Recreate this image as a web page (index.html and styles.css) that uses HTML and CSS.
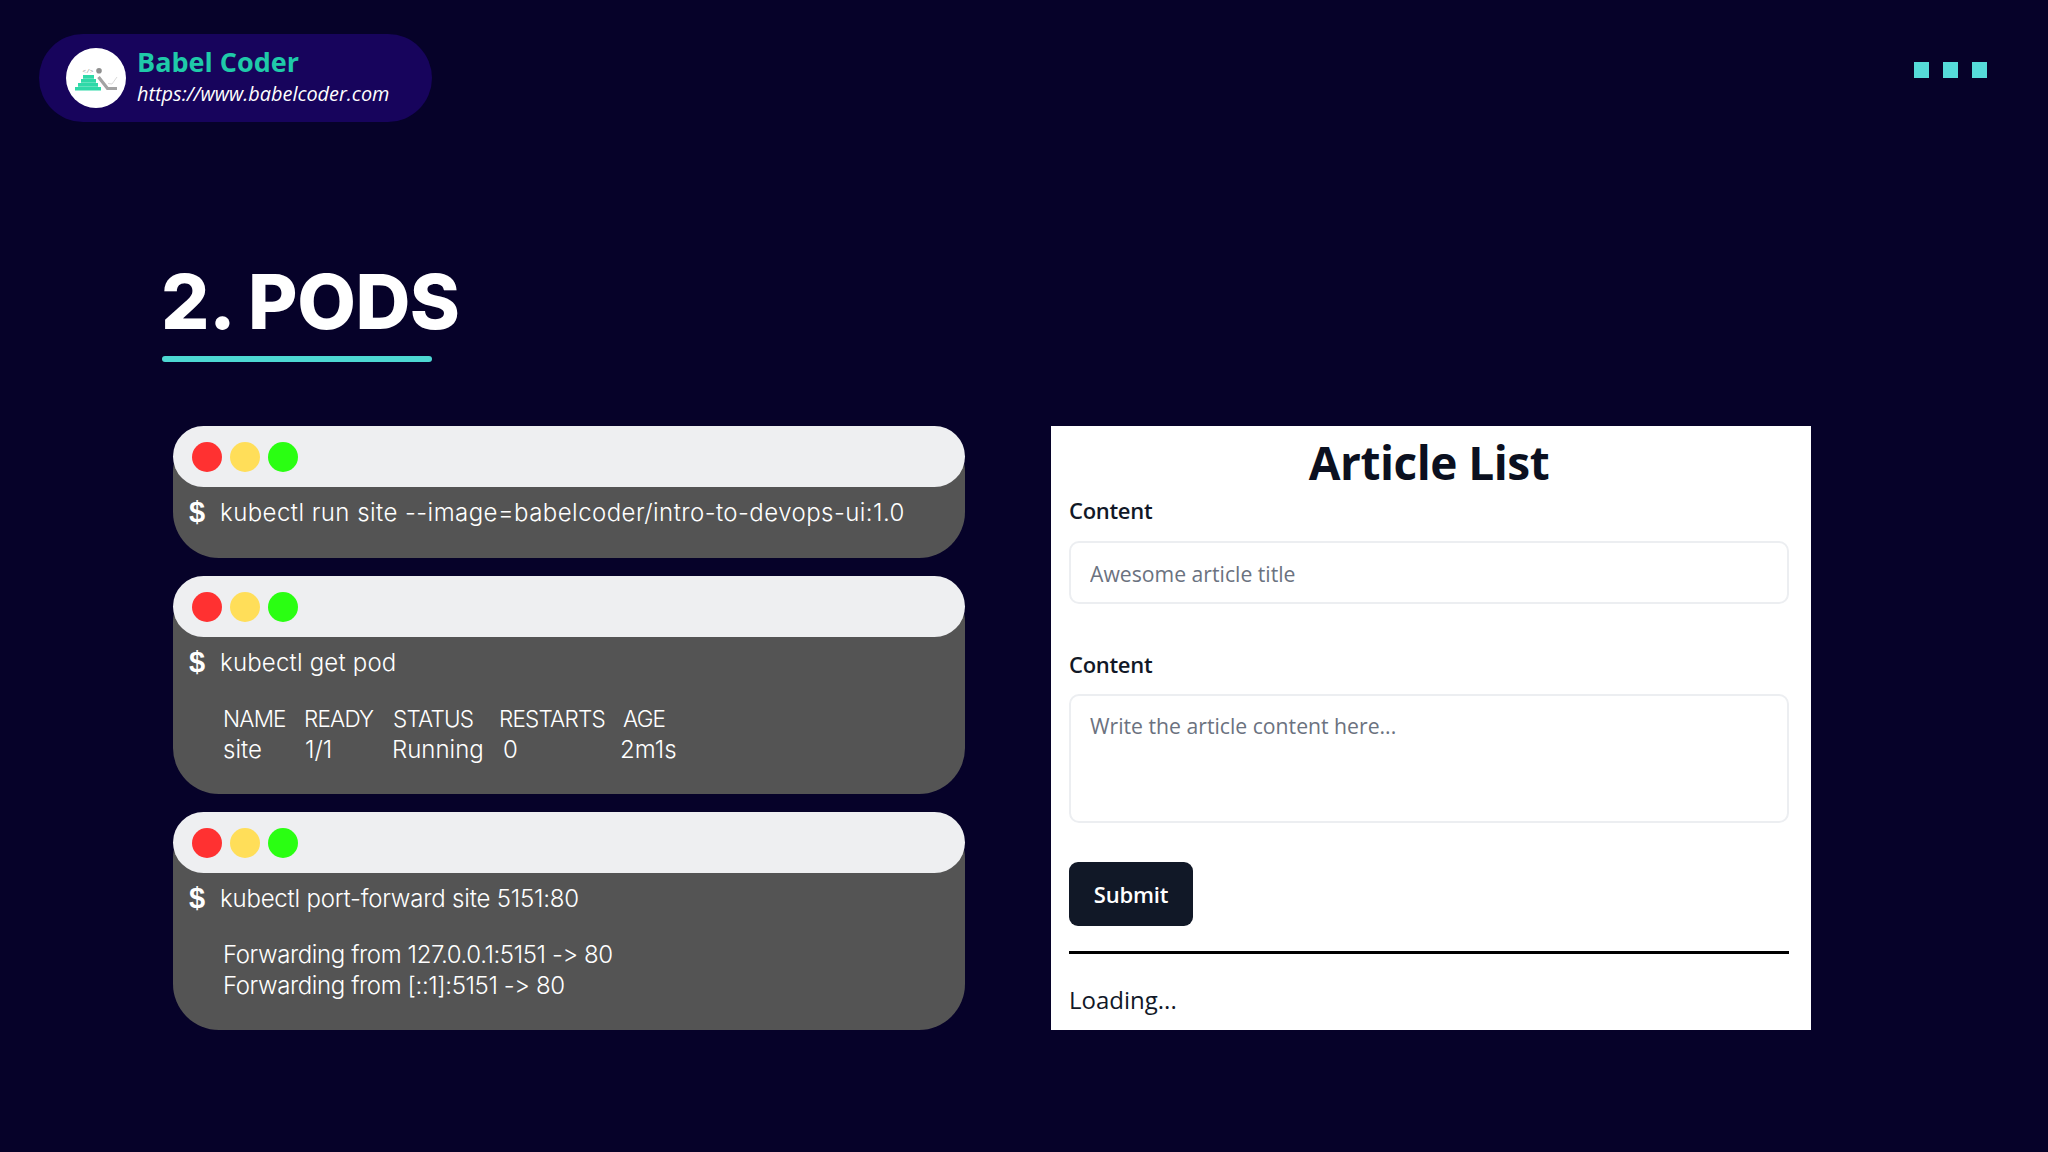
FILE: index.html
```html
<!DOCTYPE html>
<html lang="en">
<head>
<meta charset="utf-8">
<title>2. Pods</title>
<link rel="stylesheet" href="styles.css">
</head>
<body>
<div class="page">
  <header class="topbar">
    <div class="brand">
      <svg class="logo" viewBox="0 0 60 60" aria-hidden="true">
        <circle cx="30" cy="30" r="30" fill="#fff"/>
        <path d="M17 27h11v3.800H17zM15 31h15v3.800H15zM12 35h20v3.800H12zM9 39h26v3.500H9z" fill="#2fd9a8"/>
        <text x="22" y="25" class="logo-code">&lt;/&gt;</text>
        <circle cx="33" cy="22.700" r="2.800" fill="#8f8f8f"/>
        <path d="M32.500 29 41.500 40.500H51" fill="none" stroke="#a3a3a3" stroke-width="3.200"/>
        <path d="M42 35.500 46 36 51 29" fill="none" stroke="#cfcfcf" stroke-width=".8"/>
      </svg>
      <div class="brand-text">
        <div class="brand-name">Babel Coder</div>
        <div class="brand-url">https://www.babelcoder.com</div>
      </div>
    </div>
    <div class="squares"><i></i><i></i><i></i></div>
  </header>

  <section class="heading">
    <h1>2. PODS</h1>
    <div class="rule"></div>
  </section>

  <main class="content">
    <div class="terminals">
      <article class="term term-short">
        <div class="term-bar"><i class="dot red"></i><i class="dot yellow"></i><i class="dot green"></i></div>
        <div class="cmd"><b>$</b><span class="wide">kubectl run site --image=babelcoder/intro-to-devops-ui:1.0</span></div>
      </article>

      <article class="term term-tall">
        <div class="term-bar"><i class="dot red"></i><i class="dot yellow"></i><i class="dot green"></i></div>
        <div class="cmd"><b>$</b><span class="slight">kubectl get pod</span></div>
        <div class="output">
          <div class="row row-head"><span>NAME</span><span>READY</span><span>STATUS</span><span>RESTARTS</span><span>AGE</span></div>
          <div class="row row-data"><span>site</span><span>1/1</span><span>Running</span><span>0</span><span>2m1s</span></div>
        </div>
      </article>

      <article class="term term-tall">
        <div class="term-bar"><i class="dot red"></i><i class="dot yellow"></i><i class="dot green"></i></div>
        <div class="cmd"><b>$</b><span class="narrow">kubectl port-forward site 5151:80</span></div>
        <div class="output">
          <div class="line">Forwarding from 127.0.0.1:5151 -&gt; 80</div>
          <div class="line">Forwarding from [::1]:5151 -&gt; 80</div>
        </div>
      </article>
    </div>

    <div class="card">
      <h2>Article List</h2>
      <form class="form">
        <label class="label">Content</label>
        <input class="field field-input" placeholder="Awesome article title">
        <label class="label label-second">Content</label>
        <textarea class="field field-area" placeholder="Write the article content here..."></textarea>
        <button class="submit" type="button">Submit</button>
      </form>
      <hr class="divider">
      <p class="loading">Loading...</p>
    </div>
  </main>
</div>
</body>
</html>
```
FILE: styles.css
```css
* { box-sizing: border-box; }
html, body { margin: 0; padding: 0; }
body { background: #060229; }

.page {
  width: 2048px;
  height: 1152px;
  padding: 34px 61px 0 39px;
  overflow: hidden;
  background: #060229;
}

.topbar { display: flex; justify-content: space-between; align-items: flex-start; }

.brand {
  width: 393px;
  height: 88px;
  padding-left: 27px;
  display: flex;
  align-items: center;
  gap: 11px;
  border-radius: 44px;
  background: #17045c;
}
.logo { width: 60px; height: 60px; flex: none; }
.logo-code { font: 6px "Liberation Mono", monospace; fill: #8f8f8f; text-anchor: middle; }
.brand-text { display: flex; flex-direction: column; margin-top: -2px; }
.brand-name {
  font: 700 27px/32px "Open Sans", sans-serif;
  color: #1fcaa9;
}
.brand-url {
  font: italic 400 19.900px/28px "Open Sans", sans-serif;
  color: #fff;
  margin-top: 2px;
}

.squares { display: flex; gap: 14px; margin-top: 28px; }
.squares i { display: block; width: 15px; height: 16px; background: #55dbd9; }

.heading { margin: 134px 0 0 122px; width: 340px; }
.heading h1 {
  margin: 0;
  font: 800 76px/90px "Inter", sans-serif;
  letter-spacing: -.5px;
  color: #fff;
  white-space: nowrap;
}
.rule { width: 270px; height: 6px; margin: 10px 0 0 1px; border-radius: 3px; background: #4dd8d3; }

.content { display: flex; gap: 86px; margin: 64px 0 0 134px; align-items: flex-start; }

.terminals { display: flex; flex-direction: column; gap: 18px; width: 792px; }
.term {
  width: 792px;
  border-radius: 46px;
  background: #545454;
  color: #fff;
  font: 300 24px/31px "Inter", sans-serif;
  font-variant-ligatures: none;
  font-feature-settings: "calt" 0;
}
.term-short { height: 132px; }
.term-tall { height: 218px; }

.term-bar {
  height: 61px;
  padding-left: 19px;
  display: flex;
  align-items: center;
  gap: 8px;
  border-radius: 31px;
  background: #eeeff1;
}
.dot { display: block; width: 30px; height: 30px; border-radius: 50%; }
.red { background: #ff3131; }
.yellow { background: #ffde59; }
.green { background: #2aff12; }

.cmd { display: flex; align-items: center; padding: 10px 0 0 16px; height: 41px; white-space: nowrap; }
.cmd b { width: 31px; flex: none; font: 700 29px/31px "Liberation Sans", sans-serif; }
.wide { letter-spacing: .45px; }
.slight { letter-spacing: .2px; }
.narrow { letter-spacing: -.2px; }

.output { margin: 25px 0 0 50px; }
.row { display: grid; white-space: nowrap; }
.row-head { grid-template-columns: 81px 89px 106px 124px auto; font-size: 22.500px; letter-spacing: -.8px; }
.row-data { grid-template-columns: 82px 87px 111px 117px auto; }
.line { white-space: nowrap; letter-spacing: -.4px; }

.card {
  width: 760px;
  height: 604px;
  padding: 0 22px 0 18px;
  background: #fff;
  color: #111827;
  overflow: hidden;
  font-family: "Open Sans", sans-serif;
}
.card h2 {
  margin: 0;
  height: 69px;
  font: 700 46px/73px "Open Sans", sans-serif;
  letter-spacing: -.5px;
  text-align: center;
  color: #0b1020;
}
.form { display: flex; flex-direction: column; align-items: flex-start; }
.label { font: 600 22px/30px "Open Sans", sans-serif; letter-spacing: -.3px; color: #111827; height: 30px; }
.label-second { margin-top: 45px; }
.field {
  display: block;
  width: 100%;
  margin: 16px 0 0;
  padding: 0 19px;
  border: 2px solid #eceef1;
  border-radius: 10px;
  background: #fff;
  color: #111827;
  font: 400 21.200px/30px "Open Sans", sans-serif;
  outline: none;
  resize: none;
}
.field::placeholder { color: #6b7280; opacity: 1; }
.field-input { height: 63px; padding-top: 2px; }
.field-area { height: 129px; margin-top: 15px; padding-top: 15px; }
.submit {
  width: 124px;
  height: 64px;
  margin-top: 39px;
  border: 0;
  border-radius: 9px;
  background: #111827;
  color: #fff;
  font: 600 22px/30px "Open Sans", sans-serif;
  letter-spacing: -.2px;
}
.divider { margin: 25px 0 0; border: 0; height: 3px; background: #000; }
.loading { margin: 23px 0 0; font: 400 24px/46px "Open Sans", sans-serif; color: #111827; }
```
